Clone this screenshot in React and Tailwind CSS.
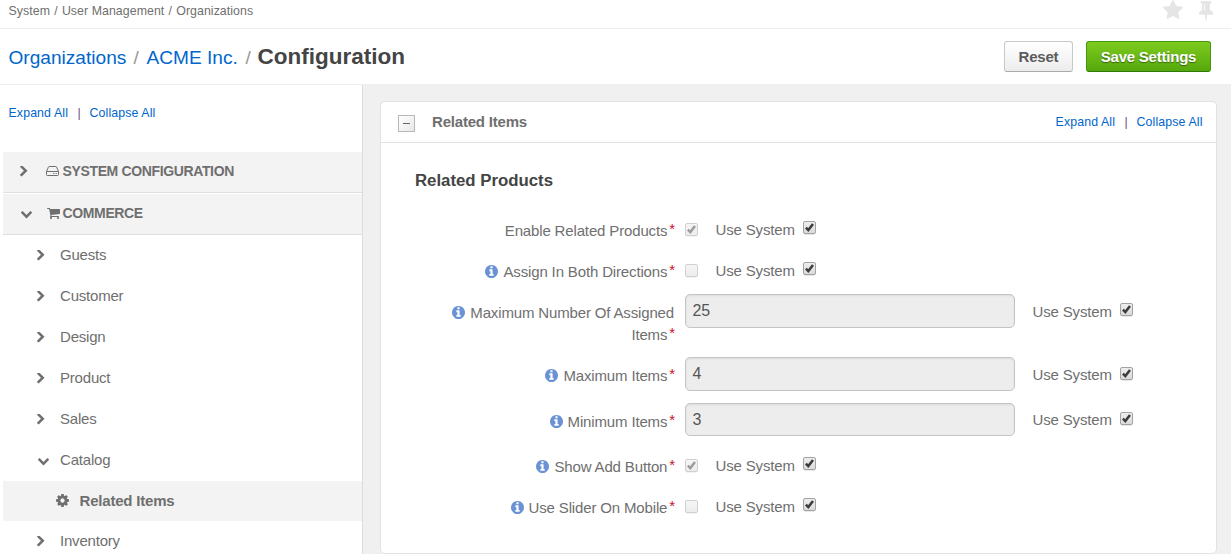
import React from 'react';

const PATHS = {
  right:
    'M1363 877l-742 742q-19 19-45 19t-45-19l-166-166q-19-19-19-45t19-45l531-531-531-531q-19-19-19-45t19-45l166-166q19-19 45-19t45 19l742 742q19 19 19 45t-19 45z',
  down:
    'M1683 808l-742 741q-19 19-45 19t-45-19l-742-741q-19-19-19-45.5t19-45.5l166-165q19-19 45-19t45 19l531 531 531-531q19-19 45-19t45 19l166 165q19 19 19 45.5t-19 45.5z',
  cart:
    'M704 1536q0 52-38 90t-90 38-90-38-38-90 38-90 90-38 90 38 38 90zm896 0q0 52-38 90t-90 38-90-38-38-90 38-90 90-38 90 38 38 90zm128-1088v512q0 24-16.5 42.5t-40.5 21.5l-1044 122q13 60 13 70 0 16-24 64h920q26 0 45 19t19 45-19 45-45 19h-1024q-26 0-45-19t-19-45q0-11 8-31.5t16-36 21.5-40 15.5-29.5l-177-823h-204q-26 0-45-19t-19-45 19-45 45-19h256q16 0 28.5 6.5t19.5 15.5 13 24.5 8 26 5.5 29.5 4.5 26h1201q26 0 45 19t19 45z',
  cog:
    'M1152 896q0-106-75-181t-181-75-181 75-75 181 75 181 181 75 181-75 75-181zm512-109v222q0 12-8 23t-20 13l-185 28q-19 54-39 91 35 50 107 138 10 12 10 25t-9 23q-27 37-99 108t-94 71q-12 0-26-9l-138-108q-44 23-91 38-16 136-29 186-7 28-36 28h-222q-14 0-24.5-8.5t-11.5-21.5l-28-184q-49-16-90-37l-141 107q-10 9-25 9-14 0-25-11-126-114-165-168-7-10-7-23 0-12 8-23 15-21 51-66.5t54-70.5q-27-50-41-99l-183-27q-13-2-21-12.5t-8-23.5v-222q0-12 8-23t19-13l186-28q14-46 39-92-40-57-107-138-10-12-10-24 0-10 9-23 26-36 98.5-107.5t94.5-71.5q13 0 26 10l138 107q44-23 91-38 16-136 29-186 7-28 36-28h222q14 0 24.5 8.5t11.5 21.5l28 184q49 16 90 37l142-107q9-9 24-9 13 0 25 10 129 119 165 170 7 8 7 22 0 12-8 23-15 21-51 66.5t-54 70.5q26 50 41 98l183 28q13 2 21 12.5t8 23.5z',
  star:
    'M1728 647q0 22-26 48l-363 354 86 500q1 7 1 20 0 21-10.5 35.5t-30.5 14.5q-19 0-40-12l-449-236-449 236q-22 12-40 12-21 0-31.5-14.5t-10.5-35.5q0-6 2-20l86-500-364-354q-25-27-25-48 0-37 56-46l502-73 225-455q19-41 49-41t49 41l225 455 502 73q56 9 56 46z',
  pin:
    'M800 864v-448q0-14-9-23t-23-9-23 9-9 23v448q0 14 9 23t23 9 23-9 9-23zm672 352q0 26-19 45t-45 19h-429l-51 483q-2 12-10.5 20.5t-20.5 8.5h-1q-27 0-32-27l-76-485h-404q-26 0-45-19t-19-45q0-123 78.5-221.5t177.5-98.5v-512q-52 0-90-38t-38-90 38-90 90-38h640q52 0 90 38t38 90-38 90-90 38v512q99 0 177.5 98.5t78.5 221.5z',
  info:
    'M1152 1376v-160q0-14-9-23t-23-9h-96v-512q0-14-9-23t-23-9h-320q-14 0-23 9t-9 23v160q0 14 9 23t23 9h96v320h-96q-14 0-23 9t-9 23v160q0 14 9 23t23 9h448q14 0 23-9t9-23zm-128-896v-160q0-14-9-23t-23-9h-192q-14 0-23 9t-9 23v160q0 14 9 23t23 9h192q14 0 23-9t9-23zm640 416q0 209-103 385.5t-279.5 279.5-385.5 103-385.5-103-279.5-279.5-103-385.5 103-385.5 279.5-279.5 385.5-103 385.5 103 279.5 279.5 103 385.5z',
};

const BOXES = {
  right: '346 144 1046 1504',
  down: '90 533 1612 1045',
  cart: '64 256 1664 1408',
  cog: '128 128 1536 1536',
  star: '64 32 1664 1587',
  pin: '320 128 1152 1664',
  info: '128 128 1536 1536',
};

function Glyph({ name, className }) {
  return (
    <svg viewBox={BOXES[name]} preserveAspectRatio="none" fill="currentColor" className={`shrink-0 ${className}`}>
      <path d={PATHS[name]} />
    </svg>
  );
}

function Drive() {
  return (
    <svg viewBox="0 0 13 10" fill="none" stroke="currentColor" className="h-[10px] w-[13px] shrink-0">
      <path d="M.5 5.5L2.4 1.1Q2.6.5 3.2.5H9.8Q10.4.5 10.6 1.1L12.5 5.5V8.7Q12.5 9.5 11.7 9.5H1.3Q.5 9.5.5 8.7ZM.5 5.5H12.5" />
      <path d="M7.2 7.5h1.2M9.6 7.5h1.2" />
    </svg>
  );
}

function Toggle({ checked, disabled }) {
  return (
    <svg
      viewBox="0 0 13 14"
      role="checkbox"
      aria-checked={checked}
      className={`h-[14px] w-[13px] shrink-0 ${disabled ? 'opacity-50' : ''}`}
    >
      <defs>
        <linearGradient id="box" x1="0" y1="0" x2="0" y2="1">
          <stop offset="0" stopColor="#eeeeee" />
          <stop offset="1" stopColor="#dadada" />
        </linearGradient>
      </defs>
      <rect x=".5" y="1.3" width="12" height="12" rx="2" fill="none" stroke="#000" strokeOpacity=".12" />
      <rect x=".5" y=".5" width="12" height="12" rx="1.5" fill="url(#box)" stroke="#a3a3a3" />
      {checked && <path d="M2.9 6.7L5.3 9.1L10 3" fill="none" stroke="#3c3c3c" strokeWidth="2.5" />}
    </svg>
  );
}

function ExpandLinks() {
  return (
    <div className="flex text-[12.35px] leading-4 tracking-[0.12px] text-[#0066cc]">
      <a className="w-[69px] whitespace-nowrap">Expand All</a>
      <span className="w-3 text-[#6a4a8a]">|</span>
      <a className="whitespace-nowrap">Collapse All</a>
    </div>
  );
}

const MENU = ['Guests', 'Customer', 'Design', 'Product', 'Sales', 'Catalog'];

function MenuItem({ label, open }) {
  return (
    <li className="flex h-[41px] items-start pl-[34px] text-[15px] leading-10 tracking-[-0.2px]">
      <span className={open ? 'mt-[17px] w-[23px]' : 'mt-[15px] w-[23px]'}>
        <Glyph name={open ? 'down' : 'right'} className={open ? 'mt-px ml-[0.5px] h-[7.5px] w-[11px]' : 'h-[10.5px] w-[7.5px]'} />
      </span>
      {label}
    </li>
  );
}

const FIELDS = [
  { label: 'Enable Related Products', on: true, row: 'h-[41px]' },
  { label: 'Assign In Both Directions', info: true, on: false, row: 'h-[41px]' },
  { label: 'Maximum Number Of Assigned Items', info: true, value: '25', row: 'h-[63px]', box: 'h-[34px]', sys: 'pt-[7px]', check: 'mt-[2px]' },
  { label: 'Maximum Items', info: true, value: '4', row: 'h-[46px]', box: 'h-[34px]', sys: 'pt-[7px]', check: 'mt-[3px]' },
  { label: 'Minimum Items', info: true, value: '3', row: 'h-[45px]', box: 'h-[33px]', sys: 'pt-[6px]', check: 'mt-[3px]' },
  { label: 'Show Add Button', info: true, on: true, row: 'h-[41px]' },
  { label: 'Use Slider On Mobile', info: true, on: false, row: 'h-[41px]' },
];

function Field({ field }) {
  const isText = field.value !== undefined;
  const split = field.label.lastIndexOf(' ');
  return (
    <div className={`flex items-start text-[15px] leading-[22px] tracking-[-0.15px] ${field.row}`}>
      <label className="w-[240px] pt-2 text-right">
        {field.info && <Glyph name="info" className="mr-[5px] inline h-[13px] w-[13px] align-[-1px] text-[#6a92d4]" />}
        <span>{field.label.slice(0, split)}</span>{' '}
        <span className="whitespace-nowrap">
          {field.label.slice(split + 1)}
          <em className="-mr-px ml-[2px] align-[2px] leading-none text-[#c8102e] not-italic">*</em>
        </span>
      </label>
      {isText ? (
        <div
          className={`ml-[11px] w-[330px] rounded-[5px] border border-[#c4c4c4] bg-[#ededed] pl-[6.5px] text-base leading-[31px] text-[#555] shadow-[inset_0_1px_2px_rgba(0,0,0,0.08)] ${field.box}`}
        >
          {field.value}
        </div>
      ) : (
        <div className="ml-[11px] w-[13px] pt-[11px]">
          <Toggle checked={field.on} disabled />
        </div>
      )}
      <div className={`ml-[17px] flex items-start ${field.sys || 'pt-[7px]'}`}>
        <span className="w-[88px] pl-[0.5px] whitespace-nowrap">Use System</span>
        <span className={field.check || 'mt-[2px]'}>
          <Toggle checked />
        </span>
      </div>
    </div>
  );
}

export default function App() {
  return (
    <div className="flex h-[554px] w-[1231px] flex-col overflow-hidden bg-white font-['Liberation_Sans',Arial,sans-serif] text-[#6f6f6f]">
      <div className="flex h-[29px] shrink-0 items-start justify-between border-b border-[#eeeeee] pr-[18.5px] pl-2">
        <nav className="flex gap-[4.2px] pt-[3px] pl-[0.5px] text-[12.35px] leading-4 tracking-[0.06px] whitespace-nowrap">
          <span>System</span>
          <span>/</span>
          <span>User Management</span>
          <span>/</span>
          <span>Organizations</span>
        </nav>
        <div className="flex gap-4 text-[#e5e5e5]">
          <Glyph name="star" className="h-[19px] w-5" />
          <Glyph name="pin" className="mt-px h-5 w-[14px]" />
        </div>
      </div>
      <header className="flex h-[56px] shrink-0 items-start justify-between border-b border-[#eeeeee] pr-5 pl-2">
        <h1 className="flex items-baseline pt-[14px] pl-[0.5px] text-[19.1px] leading-7 whitespace-nowrap">
          <a className="w-[125px] text-[#0066cc]">Organizations</a>
          <span className="w-[13px] text-[#999]">/</span>
          <a className="w-[99px] text-[#0066cc]">ACME Inc.</a>
          <span className="w-[12px] text-[#999]">/</span>
          <span className="text-[22.5px] font-bold text-[#444]">Configuration</span>
        </h1>
        <div className="flex gap-[13px] pt-3 text-[15px] leading-[28px] font-bold tracking-[-0.22px]">
          <button className="h-[31px] w-[69px] rounded-[3px] border border-[#c8c8c8] border-b-[#aaa] bg-gradient-to-b from-white to-[#ededed] text-[#5c5c5c]">
            Reset
          </button>
          <button className="h-[31px] w-[125px] rounded-[3px] border border-[#459a12] border-b-[#2f7a08] bg-gradient-to-b from-[#7ecb1f] to-[#55a80c] text-white [text-shadow:0_1px_1px_rgba(0,0,0,0.45)]">
            Save Settings
          </button>
        </div>
      </header>
      <div className="flex min-h-0 grow">
        <aside className="w-[363px] shrink-0 overflow-hidden border-r border-[#dddddd] pl-[3px]">
          <div className="h-[67px] pt-[20px] pl-[5.5px]">
            <ExpandLinks />
          </div>
          <div className="mb-px flex h-[41px] border-b border-[#dfdfdf] bg-[#f3f3f3] pl-[17px] text-[14px] leading-[39px] font-bold tracking-[-0.36px]">
            <Glyph name="right" className="mt-[14px] mr-[18.5px] h-[10.5px] w-[7.5px]" />
            <span className="mt-[14px] mr-[3.5px]">
              <Drive />
            </span>
            SYSTEM CONFIGURATION
          </div>
          <div className="flex h-[41px] border-b border-[#dfdfdf] bg-[#f3f3f3] pl-[17.5px] text-[14px] leading-[39px] font-bold tracking-[-0.36px]">
            <Glyph name="down" className="mt-[17px] mr-[15.5px] h-[7.5px] w-[11px]" />
            <Glyph name="cart" className="mt-[14px] mr-[2.5px] h-[11px] w-[13px]" />
            COMMERCE
          </div>
          <ul>
            {MENU.map((label) => (
              <MenuItem key={label} label={label} open={label === 'Catalog'} />
            ))}
            <li className="flex h-10 bg-[#f3f3f3] pl-[53px] text-[15px] leading-10 font-bold tracking-[-0.2px]">
              <Glyph name="cog" className="mt-[13px] mr-[10.5px] h-[13px] w-[13px]" />
              Related Items
            </li>
            <MenuItem label="Inventory" />
          </ul>
        </aside>
        <main className="grow bg-[#f0f0f0] pt-4 pl-[17px]">
          <section className="h-[453px] w-[837px] rounded-[5px] border border-[#e2e2e2] bg-white">
            <div className="flex h-[41px] items-start justify-between border-b border-[#e2e2e2] pr-[13.5px] pl-[17px]">
              <div className="flex items-start">
                <div className="mt-[13px] flex h-[17px] w-[17px] items-center justify-center border border-[#b8b8b8] bg-gradient-to-br from-white to-[#e8e8e8]">
                  <span className="h-px w-[7px] bg-[#666]" />
                </div>
                <h2 className="ml-[17px] pt-[10px] text-[15px] leading-5 font-bold tracking-[-0.2px]">Related Items</h2>
              </div>
              <div className="pt-3">
                <ExpandLinks />
              </div>
            </div>
            <h3 className="h-[69px] pt-[27px] pl-[34px] text-[16.8px] leading-[22px] font-bold text-[#444]">Related Products</h3>
            <div className="pl-[53px]">
              {FIELDS.map((field) => (
                <Field key={field.label} field={field} />
              ))}
            </div>
          </section>
        </main>
      </div>
    </div>
  );
}
